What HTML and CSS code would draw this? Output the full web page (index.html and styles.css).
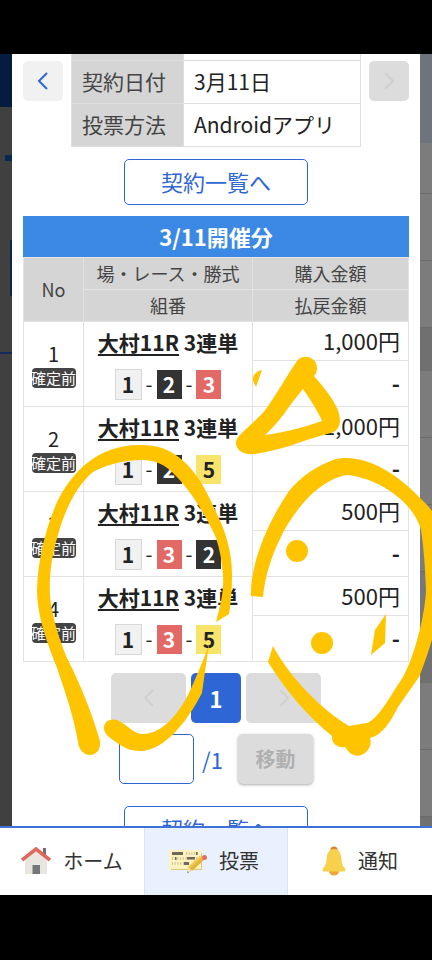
FILE: index.html
```html
<!DOCTYPE html>
<html lang="ja">
<head>
<meta charset="utf-8">
<meta name="viewport" content="width=device-width, initial-scale=1">
<title>投票</title>
<link rel="stylesheet" href="styles.css">
</head>
<body>
<div class="bar-top"></div>
<main class="stage">
  <div class="under under-left">
    <div class="u-head"></div>
    <div class="u-dash"></div>
    <div class="u-button"></div>
    <div class="u-rule"></div>
  </div>
  <section class="dialog">
    <div class="contract">
      <button class="step" type="button" aria-label="前へ"><svg viewBox="0 0 12 18"><path d="M10 1 2 9l8 8"/></svg></button>
      <table class="info">
        <tr class="info-cut"><th></th><td></td></tr>
        <tr><th scope="row">契約日付</th><td>3月11日</td></tr>
        <tr><th scope="row">投票方法</th><td>Androidアプリ</td></tr>
      </table>
      <button class="step" type="button" aria-label="次へ" disabled><svg viewBox="0 0 12 18"><path d="m2 1 8 8-8 8"/></svg></button>
    </div>
    <a class="list-link" href="#">契約一覧へ</a>
    <h2 class="day">3/11開催分</h2>
    <table class="bets">
      <colgroup><col class="col-no"><col class="col-race"><col></colgroup>
      <thead>
        <tr><th rowspan="2">No</th><th>場・レース・勝式</th><th>購入金額</th></tr>
        <tr><th>組番</th><th>払戻金額</th></tr>
      </thead>
      <tbody>
        <tr class="buy"><td class="no" rowspan="2">1<span class="badge">確定前</span></td><td class="race" rowspan="2"><div class="title"><a href="#">大村11R</a> 3連単</div><div class="combo"><b class="n1">1</b>-<b class="n2">2</b>-<b class="n3">3</b></div></td><td class="yen">1,000円</td></tr>
        <tr class="pay"><td class="yen">-</td></tr>
        <tr class="buy"><td class="no" rowspan="2">2<span class="badge">確定前</span></td><td class="race" rowspan="2"><div class="title"><a href="#">大村11R</a> 3連単</div><div class="combo"><b class="n1">1</b>-<b class="n2">2</b>-<b class="n5">5</b></div></td><td class="yen">1,000円</td></tr>
        <tr class="pay"><td class="yen">-</td></tr>
        <tr class="buy"><td class="no" rowspan="2">3<span class="badge">確定前</span></td><td class="race" rowspan="2"><div class="title"><a href="#">大村11R</a> 3連単</div><div class="combo"><b class="n1">1</b>-<b class="n3">3</b>-<b class="n2">2</b></div></td><td class="yen">500円</td></tr>
        <tr class="pay"><td class="yen">-</td></tr>
        <tr class="buy"><td class="no" rowspan="2">4<span class="badge">確定前</span></td><td class="race" rowspan="2"><div class="title"><a href="#">大村11R</a> 3連単</div><div class="combo"><b class="n1">1</b>-<b class="n3">3</b>-<b class="n5">5</b></div></td><td class="yen">500円</td></tr>
        <tr class="pay"><td class="yen">-</td></tr>
      </tbody>
    </table>
    <div class="pager">
      <button class="page" type="button" aria-label="前のページ" disabled><svg viewBox="0 0 12 18"><path d="M10 1 2 9l8 8"/></svg></button>
      <button class="page current" type="button">1</button>
      <button class="page" type="button" aria-label="次のページ" disabled><svg viewBox="0 0 12 18"><path d="m2 1 8 8-8 8"/></svg></button>
    </div>
    <form class="jump">
      <input id="page-no" type="text" inputmode="numeric">
      <label for="page-no">/1</label>
      <button type="button" disabled>移動</button>
    </form>
    <a class="list-link" href="#">契約一覧へ</a>
  </section>
  <div class="under under-right">
    <div class="r-head"></div>
    <div class="r-row short"></div>
    <div class="r-row"></div>
    <div class="r-row"></div>
    <div class="r-band"></div>
    <div class="r-row"></div>
    <div class="r-row"></div>
    <div class="r-row"></div>
    <div class="r-gap"></div>
    <div class="r-band"></div>
    <div class="r-row"></div>
    <div class="r-row"></div>
    <div class="r-band"></div>
  </div>
</main>
<nav class="tabs">
  <a href="#">
    <svg class="ico-home" viewBox="0 0 30 28"><path fill="#707272" d="M22 1h3v9h-3z"/><path fill="#e9e5df" d="m15 4 11 9v14H4V13z"/><path fill="none" stroke="#de6a5d" stroke-width="3.6" d="m1 13 14-11 14 11"/><path fill="#747777" d="M11.500 18h7.500v9h-7.500z"/></svg>
    <span>ホーム</span>
  </a>
  <a class="active" href="#">
    <svg class="ico-vote" viewBox="0 0 38 28"><path fill="#d9c878" d="M2 6h31v17H2z"/><path fill="#fdf2bd" d="M0 3h32v19H0z"/><path fill="#6d6959" d="M3 5h11v3H3z"/><g fill="none" stroke-width="2.500" stroke-dasharray="1 1.700"><path stroke="#c4bb95" d="M17 6.500h12M3 11.500h26M3 16.500h18"/></g><path fill="#6d6959" d="M27 5h1.500v3H27zM6 10h1.500v3H6zM18 10h8v2.500h-8zM15 15h5v3h-5z"/><path fill="#e6b63c" d="m31 9 4 4-12 11-4-4z"/><path fill="#f2ca58" d="m31 9 1.500 1.500-12 11L19 20z"/><path fill="#f0dfb5" d="m19 20 4 4-4.500 2z"/><path fill="#777" d="m18.600 24 1.300 1.500-1.700.8z"/><circle cx="35.500" cy="10.500" r="2.500" fill="#df6d60"/></svg>
    <span>投票</span>
  </a>
  <a href="#">
    <svg class="ico-bell" viewBox="0 0 24 30"><circle cx="12" cy="4" r="3.600" fill="#df812f"/><ellipse cx="12" cy="25.500" rx="5" ry="4" fill="#f3a43b"/><path fill="#f7d14b" d="M12 3c5 0 7 4 7.500 10 .3 5 1.500 7 3.500 9.500 1 1.500.5 3-1 3H2c-1.500 0-2-1.500-1-3C3 20 4.200 18 4.500 13 5 7 7 3 12 3z"/></svg>
    <span>通知</span>
  </a>
</nav>
<div class="bar-bottom"></div>
<svg class="ink" viewBox="0 0 432 960" preserveAspectRatio="xMidYMin meet" aria-hidden="true">
  <path d="M216 622 C221 603 224 590 223 575 C222 562 220 550 216 538 C206 515 190 490 175 475 C166 465 155 460 142 460 C122 460 106 465 93 472 C76 486 64 512 58 535 C52 554 49 575 50 595 C51 612 59 640 68 660 C80 684 91 710 100 741 C102 759 80 760 78 742 C74 718 66 694 57 668 C46 640 37 615 37 590 C38 560 45 530 57 502 C72 472 98 444 142 445 C181 444 202 479 216 512 C226 532 232 552 232 575 Q232 596 229 614Z"/>
  <path d="M209 645 Q205 670 202 693 C188 720 165 751 140 751 C127 751 120 745 109 737 C97 726 109 714 121 722 C128 726 134 734 143 734 C160 734 176 718 188 695 Q198 674 209 645Z"/>
  <path fill-rule="evenodd" d="M297 361 C303 353 317 357 317 368 Q317 373 314 376 Q331 395 337 408 C342 420 341 430 331 433 C311 437 285 450 255 454 C237 456 232 443 239 436 C246 428 258 419 266 409 C278 392 286 377 297 361Z M303 389 Q292 402 284 414 Q274 427 265 435 Q294 431 322 421 Q317 409 303 389Z"/>
  <path d="M262 370 C256 371 252 376 253 381 L256 387Z"/>
  <path d="M251 596 C250 568 264 528 289 491 Q307 469 336 459 C360 454 391 467 421 499 Q428 505 434 514 V633 Q426 660 419 677 L398 707 C390 723 382 735 370 738 C374 750 359 762 349 752 L345 747 C337 748 331 743 332 736 Q296 707 268 662 L273 646 C291 679 321 709 349 726 L367 723 C379 718 389 698 403 677 C415 655 425 615 426 590 C425 567 424 549 421 530 C415 506 385 480 348 475 C320 478 292 512 280 539 C271 557 265 577 263 597Z"/>
  <circle cx="297" cy="551" r="11"/>
  <circle cx="322" cy="643" r="11"/>
  <path d="M386 614 385 643 371 655 375 630Z"/>
</svg>
</body>
</html>
```
FILE: styles.css
```css
* { box-sizing: border-box; }

body {
  position: relative;
  display: flex;
  flex-direction: column;
  height: 100vh;
  margin: 0;
  overflow: hidden;
  background: #000;
  color: #222;
  font-family: "Noto Sans CJK JP", "Noto Sans", sans-serif;
  font-size: 20px;
  line-height: 24px;
}

a { color: inherit; text-decoration: none; }
button, input { font: inherit; margin: 0; padding: 0; border: 0; }
table { border-collapse: collapse; }
th { font-weight: 400; }

.bar-top { flex: none; height: 54px; }
.bar-bottom { flex: none; height: 65px; }

.stage {
  flex: 1;
  min-height: 0;
  display: grid;
  grid-template-columns: 12px minmax(0, 1fr) 12px;
  overflow: hidden;
}

/* Dimmed page behind the dialog */
.under { overflow: hidden; }
.under-left { background: #404040; }
.u-head { height: 53px; background: #061b40; }
.u-dash { height: 6px; margin: 48px 0 0 5px; background: #0b2852; }
.u-button { height: 56px; margin: 79px 0 0 10px; background: #0d2453; }
.u-rule { height: 2px; margin-top: 56px; background: #15295a; }
.under-right { background: #7c7c7c; }
.r-head { height: 89px; background: #6f737c; }
.r-row { height: 67px; border-bottom: 1px solid #6b6b6b; }
.r-row.short { height: 51px; }
.r-band { height: 43px; background: #707070; }
.r-gap { height: 68px; background: #777; }

.dialog { padding: 0 11px; background: #fff; }

.contract { display: flex; justify-content: space-between; gap: 8px; }
.step {
  display: grid;
  place-items: center;
  width: 40px;
  height: 40px;
  margin-top: 7px;
  border-radius: 5px;
  background: #f1f1f1;
  color: #2f66d5;
}
.step:disabled { background: #dcdcdc; color: #cfcfcf; }
.step svg, .page svg {
  width: 12px;
  height: 18px;
  fill: none;
  stroke: currentColor;
  stroke-width: 2;
}

.info { flex: 1; font-size: 21px; }
.info th, .info td {
  height: 43px;
  padding: 0 10px 2px;
  border: 1px solid #dedede;
  text-align: left;
  white-space: nowrap;
}
.info th { width: 112px; background: #d5d5d5; color: #444; }
.info .info-cut th, .info .info-cut td { height: 6px; border-top: 0; }

.list-link {
  display: block;
  width: 184px;
  height: 46px;
  margin: 12px auto 0;
  border: 1px solid #2f66d5;
  border-radius: 5px;
  color: #2f66d5;
  font-size: 22px;
  line-height: 42px;
  text-align: center;
}

.day {
  margin: 11px 0 0;
  padding-bottom: 1px;
  background: #3b89e5;
  color: #fff;
  font-size: 22px;
  line-height: 40px;
  text-align: center;
}

.bets { width: 100%; table-layout: fixed; }
.col-no { width: 60px; }
.col-race { width: 169px; }
.bets th, .bets td { padding: 0; border: 1px solid #e2e2e2; text-align: center; }
.bets th { height: 32px; background: #d5d5d5; color: #444; font-size: 18px; }
.bets .buy { height: 39px; }
.bets .pay { height: 46px; }
.bets .yen { padding: 0 8px 2px 0; font-size: 22px; text-align: right; }
.bets .pay .yen { font-weight: 700; }
.bets .no, .bets .race { padding-top: 2px; }
.badge {
  display: flex;
  justify-content: center;
  width: 44px;
  height: 20px;
  margin: 2px auto 0;
  border-radius: 4px;
  background: #444;
  color: #fff;
  font-size: 15px;
  line-height: 20px;
  white-space: nowrap;
}
.title { font-size: 21px; font-weight: 700; white-space: nowrap; }
.title a { text-decoration: underline; text-decoration-thickness: 2px; text-underline-offset: 3px; }
.combo {
  display: flex;
  align-items: center;
  justify-content: center;
  gap: 4px;
  height: 31px;
  margin-top: 15px;
}
.combo b { width: 25px; height: 29px; color: #fff; font-size: 21px; line-height: 29px; }
.combo .n1 { width: 27px; height: 31px; border: 1px solid #d8d8d8; background: #f1f1f1; color: #222; }
.combo .n2 { background: #333; }
.combo .n3 { background: #e26966; }
.combo .n5 { background: #f7e469; color: #222; }

.pager { display: flex; justify-content: center; gap: 5px; margin-top: 11px; }
.page {
  display: grid;
  place-items: center;
  width: 75px;
  height: 50px;
  border-radius: 5px;
  background: #dcdcdc;
  color: #d0d0d0;
}
.page.current { width: 50px; background: #2f66d5; color: #fff; font-size: 22px; font-weight: 700; }

.jump { display: flex; align-items: center; justify-content: center; gap: 8px; margin-top: 11px; }
.jump input { width: 75px; height: 50px; border: 1px solid #2f66d5; border-radius: 5px; text-align: center; }
.jump label { margin-right: 7px; color: #2f66d5; font-size: 22px; }
.jump button {
  width: 75px;
  height: 50px;
  border-radius: 5px;
  background: #dcdcdc;
  box-shadow: 0 1px 3px #aaa;
  color: #b0b0b0;
  font-weight: 700;
}
.jump + .list-link { margin-top: 22px; }

.tabs {
  flex: none;
  display: grid;
  grid-template-columns: repeat(3, 1fr);
  height: 69px;
  border-top: 2px solid #3f72d9;
  background: #fff;
  color: #333;
}
.tabs a { display: flex; align-items: center; justify-content: center; gap: 12px; padding-bottom: 2px; }
.tabs .active { padding-right: 4px; border: 1px solid #dfe3ec; border-width: 0 1px; background: #eaf1fe; }
.ico-home { width: 30px; height: 28px; }
.ico-vote { width: 38px; height: 28px; }
.ico-bell { width: 24px; height: 30px; }

/* Hand-drawn marks over the page */
.ink {
  position: absolute;
  inset: 0;
  width: 100%;
  height: 100%;
  fill: #ffc400;
  pointer-events: none;
}
```
